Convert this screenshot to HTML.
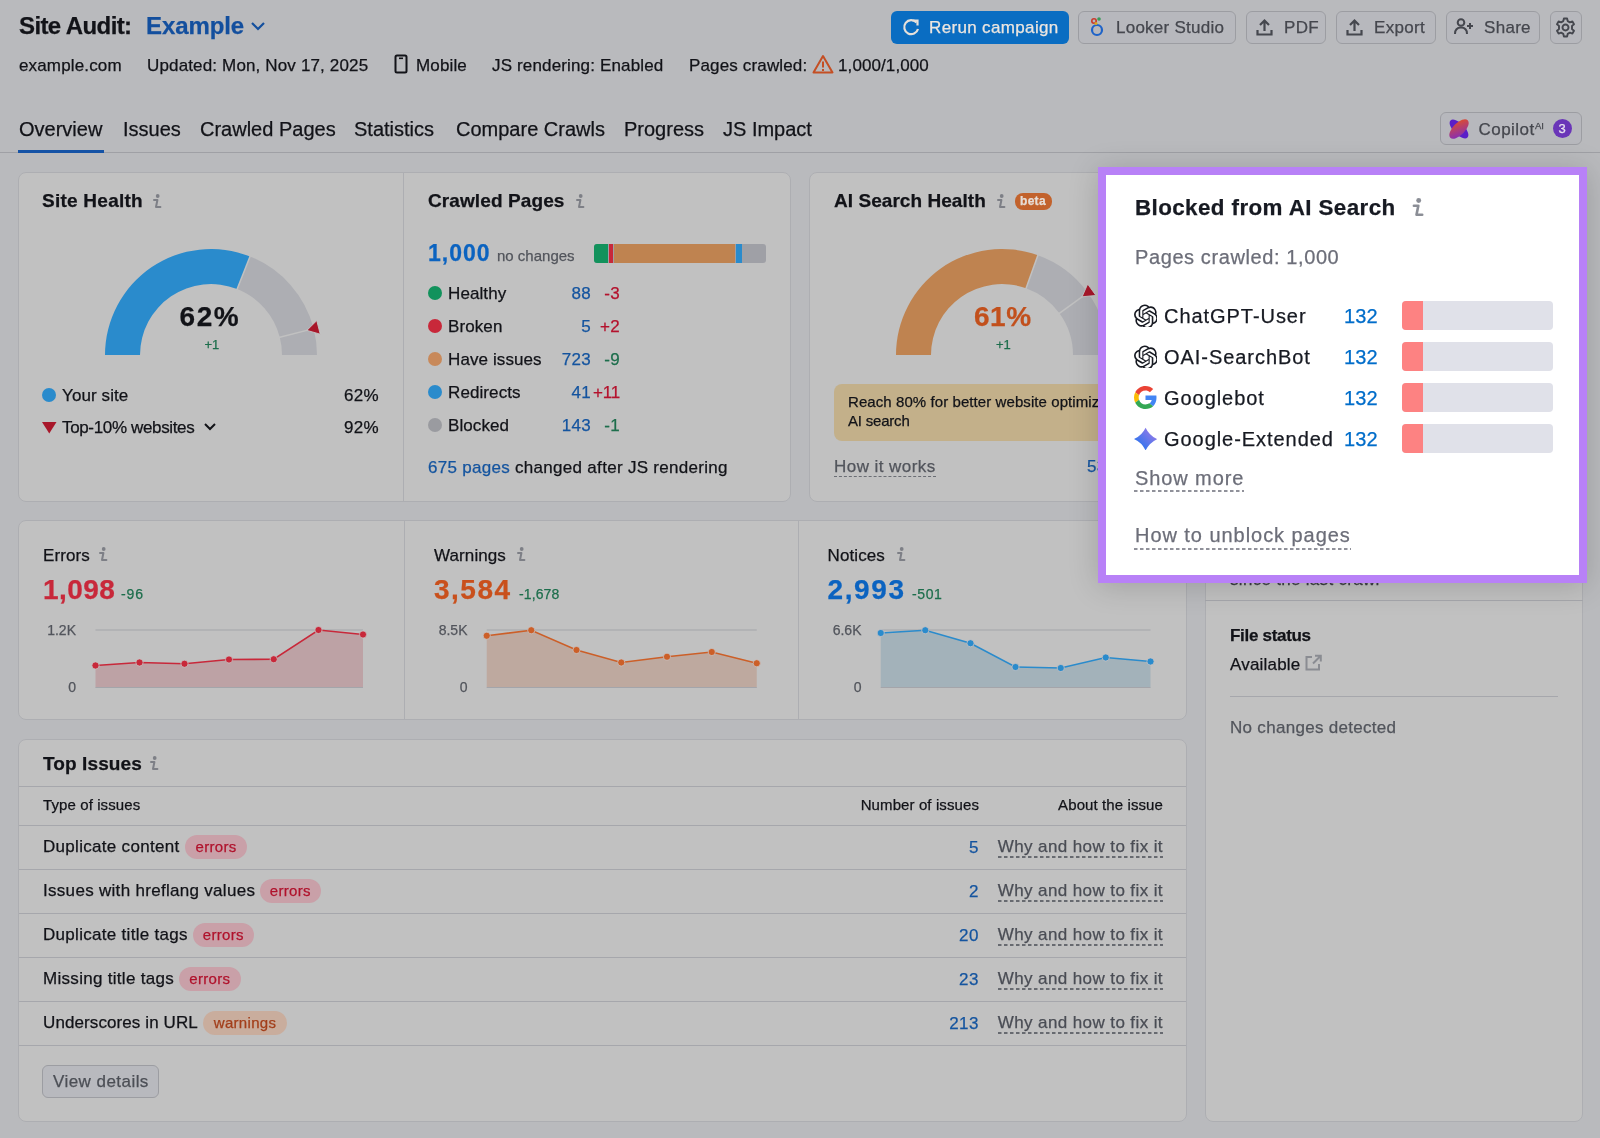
<!DOCTYPE html>
<html><head><meta charset="utf-8"><title>Site Audit</title>
<style>
html,body{margin:0;padding:0;}
body{width:1600px;height:1138px;position:relative;overflow:hidden;will-change:transform;background:#b9babd;font-family:"Liberation Sans",sans-serif;}
.t{position:absolute;white-space:nowrap;-webkit-text-stroke:0.25px currentColor;}
.r{position:absolute;}
.badge{display:inline-block;height:24px;line-height:24px;border-radius:12px;padding:0 10px;font-size:15px;margin-left:6px;letter-spacing:0.2px;}
.badge.errors{background:#c9a2aa;color:#b4122d;}
.badge.warnings{background:#c9ae9e;color:#a8401c;}
</style></head><body>
<div class="t" style="left:19px;top:14.38px;font-size:24px;line-height:24px;font-weight:700;color:#121318;letter-spacing:-0.6px;">Site Audit:</div>
<div class="t" style="left:146px;top:14.38px;font-size:24px;line-height:24px;font-weight:700;color:#134f9e;letter-spacing:-0.1px;">Example</div>
<svg class="r" style="left:250px;top:20px;" width="16" height="12" viewBox="0 0 16 12"><path d="M2 3 L8 9 L14 3" fill="none" stroke="#134f9e" stroke-width="2.2"/></svg>
<div class="t" style="left:19px;top:56.51px;font-size:17px;line-height:17px;font-weight:400;color:#121318;letter-spacing:0.15px;">example.com</div>
<div class="t" style="left:147px;top:56.51px;font-size:17px;line-height:17px;font-weight:400;color:#121318;letter-spacing:0.15px;">Updated: Mon, Nov 17, 2025</div>
<svg class="r" style="left:393px;top:54px;" width="16" height="20" viewBox="0 0 16 20"><rect x="2.5" y="1.5" width="11" height="17" rx="1.5" fill="none" stroke="#121318" stroke-width="2"/><rect x="6" y="3.5" width="4" height="1.6" fill="#121318"/></svg>
<div class="t" style="left:416px;top:56.51px;font-size:17px;line-height:17px;font-weight:400;color:#121318;letter-spacing:0.15px;">Mobile</div>
<div class="t" style="left:492px;top:56.51px;font-size:17px;line-height:17px;font-weight:400;color:#121318;letter-spacing:0.15px;">JS rendering: Enabled</div>
<div class="t" style="left:689px;top:56.51px;font-size:17px;line-height:17px;font-weight:400;color:#121318;letter-spacing:0.15px;">Pages crawled:</div>
<svg class="r" style="left:812px;top:54px;" width="22" height="20" viewBox="0 0 22 20"><path d="M11 2 L20.5 18.5 L1.5 18.5 Z" fill="none" stroke="#c44f24" stroke-width="2" stroke-linejoin="round"/><rect x="10" y="7.5" width="2" height="6" fill="#c44f24"/><rect x="10" y="15" width="2" height="2" fill="#c44f24"/></svg>
<div class="t" style="left:838px;top:56.51px;font-size:17px;line-height:17px;font-weight:400;color:#121318;letter-spacing:0.1px;">1,000/1,000</div>
<div class="r" style="left:891px;top:10.5px;width:177.5px;height:33px;background:#0a6dc2;border-radius:6px;"></div>
<svg class="r" style="left:900px;top:16px;" width="22" height="22" viewBox="0 0 22 22"><path d="M16.5 6.5 A7 7 0 1 0 18 13" fill="none" stroke="#e6e0da" stroke-width="2.2"/><path d="M12.5 4.5 L17.5 4.5 L17.5 9.5" fill="none" stroke="#e6e0da" stroke-width="2.2"/></svg>
<div class="t" style="left:929px;top:18.61px;font-size:17px;line-height:17px;font-weight:400;color:#ece6e0;letter-spacing:0.35px;">Rerun campaign</div>
<div class="r" style="left:1078px;top:10.5px;width:158px;height:33px;background:#b7b8bd;border:1px solid #9c9da2;border-radius:6px;box-sizing:border-box;"></div>
<svg class="r" style="left:1089px;top:15px;" width="16" height="24" viewBox="0 0 16 24"><circle cx="8" cy="15" r="5" fill="none" stroke="#1e63c8" stroke-width="2.2"/><circle cx="5" cy="6" r="2.2" fill="none" stroke="#c83a2a" stroke-width="1.6"/><circle cx="10" cy="4" r="1.8" fill="#3a9a5a"/><circle cx="7" cy="8.5" r="1.5" fill="#d8a820"/></svg>
<div class="t" style="left:1116px;top:18.61px;font-size:17px;line-height:17px;font-weight:400;color:#45474e;letter-spacing:0.25px;">Looker Studio</div>
<div class="r" style="left:1245.5px;top:10.5px;width:80.5px;height:33px;background:#b7b8bd;border:1px solid #9c9da2;border-radius:6px;box-sizing:border-box;"></div>
<svg class="r" style="left:1256px;top:18px;" width="17" height="18" viewBox="0 0 17 18"><path d="M8.5 13 V3 M4 7 L8.5 2.5 L13 7" fill="none" stroke="#45474e" stroke-width="2.2"/><path d="M1.5 12 V16.5 H15.5 V12" fill="none" stroke="#45474e" stroke-width="2.2"/></svg>
<div class="t" style="left:1284px;top:18.61px;font-size:17px;line-height:17px;font-weight:400;color:#45474e;letter-spacing:0.3px;">PDF</div>
<div class="r" style="left:1335.5px;top:10.5px;width:100.5px;height:33px;background:#b7b8bd;border:1px solid #9c9da2;border-radius:6px;box-sizing:border-box;"></div>
<svg class="r" style="left:1346px;top:18px;" width="17" height="18" viewBox="0 0 17 18"><path d="M8.5 13 V3 M4 7 L8.5 2.5 L13 7" fill="none" stroke="#45474e" stroke-width="2.2"/><path d="M1.5 12 V16.5 H15.5 V12" fill="none" stroke="#45474e" stroke-width="2.2"/></svg>
<div class="t" style="left:1374px;top:18.61px;font-size:17px;line-height:17px;font-weight:400;color:#45474e;letter-spacing:0.3px;">Export</div>
<div class="r" style="left:1445.5px;top:10.5px;width:94.5px;height:33px;background:#b7b8bd;border:1px solid #9c9da2;border-radius:6px;box-sizing:border-box;"></div>
<svg class="r" style="left:1454px;top:17px;" width="20" height="18" viewBox="0 0 20 18"><circle cx="7" cy="5.5" r="3.3" fill="none" stroke="#45474e" stroke-width="2"/><path d="M1 17 C1 12 4 10.5 7 10.5 C10 10.5 13 12 13 17" fill="none" stroke="#45474e" stroke-width="2"/><path d="M16 6 V12 M13 9 H19" stroke="#45474e" stroke-width="2"/></svg>
<div class="t" style="left:1484px;top:18.61px;font-size:17px;line-height:17px;font-weight:400;color:#45474e;letter-spacing:0.3px;">Share</div>
<div class="r" style="left:1549.5px;top:10.5px;width:32.5px;height:33px;background:#b7b8bd;border:1px solid #9c9da2;border-radius:6px;box-sizing:border-box;"></div>
<svg class="r" style="left:1555px;top:17px;" width="21" height="21" viewBox="0 0 21 21"><g transform="translate(10.5,10.5)"><path d="M-1.6 -9 H1.6 L2.2 -6.4 L4.4 -5.2 L6.9 -6.1 L8.5 -3.3 L6.5 -1.6 V1.6 L8.5 3.3 L6.9 6.1 L4.4 5.2 L2.2 6.4 L1.6 9 H-1.6 L-2.2 6.4 L-4.4 5.2 L-6.9 6.1 L-8.5 3.3 L-6.5 1.6 V-1.6 L-8.5 -3.3 L-6.9 -6.1 L-4.4 -5.2 L-2.2 -6.4 Z" fill="none" stroke="#45474e" stroke-width="1.9" stroke-linejoin="round"/><circle r="3" fill="none" stroke="#45474e" stroke-width="1.9"/></g></svg>
<div class="t" style="left:19px;top:118.87px;font-size:20px;line-height:20px;font-weight:400;color:#121318;letter-spacing:0px;">Overview</div>
<div class="t" style="left:123px;top:118.87px;font-size:20px;line-height:20px;font-weight:400;color:#121318;letter-spacing:0px;">Issues</div>
<div class="t" style="left:200px;top:118.87px;font-size:20px;line-height:20px;font-weight:400;color:#121318;letter-spacing:0px;">Crawled Pages</div>
<div class="t" style="left:354px;top:118.87px;font-size:20px;line-height:20px;font-weight:400;color:#121318;letter-spacing:0px;">Statistics</div>
<div class="t" style="left:456px;top:118.87px;font-size:20px;line-height:20px;font-weight:400;color:#121318;letter-spacing:0px;">Compare Crawls</div>
<div class="t" style="left:624px;top:118.87px;font-size:20px;line-height:20px;font-weight:400;color:#121318;letter-spacing:0px;">Progress</div>
<div class="t" style="left:723px;top:118.87px;font-size:20px;line-height:20px;font-weight:400;color:#121318;letter-spacing:0px;">JS Impact</div>
<div class="r" style="left:0px;top:152px;width:1600px;height:1px;background:#9fa0a5;"></div>
<div class="r" style="left:18px;top:150px;width:86px;height:3px;background:#1553a6;"></div>
<div class="r" style="left:1440px;top:112px;width:142px;height:33px;background:#b7b8bd;border:1px solid #9c9da2;border-radius:6px;box-sizing:border-box;"></div>
<svg class="r" style="left:1448px;top:117.5px;" width="22" height="22" viewBox="0 0 22 22"><defs><linearGradient id="cg" x1="0" y1="1" x2="1" y2="0"><stop offset="0" stop-color="#7a2ac8"/><stop offset="1" stop-color="#e8501e"/></linearGradient></defs><ellipse cx="11" cy="11" rx="12" ry="5.6" transform="rotate(45 11 11)" fill="#5a1fc8"/><ellipse cx="11" cy="11" rx="12.3" ry="6" transform="rotate(-45 11 11)" fill="url(#cg)"/></svg>
<div class="t" style="left:1478.5px;top:120.61px;font-size:17px;line-height:17px;font-weight:400;color:#45474e;letter-spacing:0.45px;">Copilot</div>
<div class="t" style="left:1535px;top:120.96px;font-size:9.5px;line-height:9.5px;font-weight:400;color:#45474e;letter-spacing:0px;">AI</div>
<div class="r" style="left:1553px;top:119px;width:19px;height:19px;background:#6a35b8;border-radius:50%;"></div>
<div class="t" style="left:1558.5px;top:122.00px;font-size:13px;line-height:13px;font-weight:400;color:#e8e2f0;letter-spacing:0px;">3</div>
<div class="r" style="left:18px;top:172px;width:773px;height:330px;background:#c1c1c1;border:1px solid #adaeb2;border-radius:8px;box-sizing:border-box;"></div>
<div class="r" style="left:403px;top:173px;width:1px;height:328px;background:#adaeb2;"></div>
<div class="r" style="left:809px;top:172px;width:378px;height:330px;background:#c1c1c1;border:1px solid #adaeb2;border-radius:8px;box-sizing:border-box;"></div>
<div class="r" style="left:1205px;top:172px;width:378px;height:950px;background:#c1c1c1;border:1px solid #adaeb2;border-radius:8px;box-sizing:border-box;"></div>
<div class="t" style="left:42px;top:191.42px;font-size:19px;line-height:19px;font-weight:700;color:#121318;letter-spacing:0.25px;">Site Health</div>
<svg class="r" style="left:150.7px;top:190.5px;" width="14.0" height="20.0" viewBox="0 0 14.0 20.0"><g transform="scale(1.0)"><circle cx="6.7" cy="5" r="1.9" fill="#7d7f86"/><path d="M3 9 H6.4 L5 16 H9.4" fill="none" stroke="#7d7f86" stroke-width="2" stroke-linejoin="round" stroke-linecap="round"/></g></svg>
<svg class="r" style="left:0px;top:0px;pointer-events:none;" width="1600" height="1138" viewBox="0 0 1600 1138"><path d="M105.00 355.00 A106 106 0 0 1 250.02 256.44 L237.14 288.99 A71 71 0 0 0 140.00 355.00 Z" fill="#2a8bcc"/><path d="M250.02 256.44 A106 106 0 0 1 313.67 328.64 L279.77 337.34 A71 71 0 0 0 237.14 288.99 Z" fill="#adaeb3"/><path d="M313.67 328.64 A106 106 0 0 1 317.00 355.00 L282.00 355.00 A71 71 0 0 0 279.77 337.34 Z" fill="#adaeb3"/><line x1="250.39" y1="255.51" x2="236.77" y2="289.92" stroke="#c1c1c1" stroke-width="1.5"/><line x1="314.64" y1="328.39" x2="278.80" y2="337.59" stroke="#c1c1c1" stroke-width="1.5"/><path d="M0 0 L-7 -12 L7 -12 Z" fill="#a8172a" stroke="#c6cccc" stroke-width="0.8" transform="translate(306.89,330.38) rotate(75.6)"/></svg>
<div class="t" style="left:179.5px;top:303.00px;font-size:28px;line-height:28px;font-weight:700;color:#121318;letter-spacing:1.6px;">62%</div>
<div class="t" style="left:204.5px;top:338.40px;font-size:13px;line-height:13px;font-weight:400;color:#1d6e4c;letter-spacing:0px;">+1</div>
<div class="r" style="left:42px;top:388px;width:14px;height:14px;background:#2a8bcc;border-radius:50%;"></div>
<div class="t" style="left:62px;top:386.81px;font-size:17px;line-height:17px;font-weight:400;color:#121318;letter-spacing:0.1px;">Your site</div>
<div class="t" style="right:1221px;top:386.81px;font-size:17px;line-height:17px;font-weight:400;color:#121318;letter-spacing:0.3px;">62%</div>
<svg class="r" style="left:42px;top:422px;" width="15" height="12" viewBox="0 0 15 12"><path d="M0 0 H14.5 L7.25 11.5 Z" fill="#a8172a"/></svg>
<div class="t" style="left:62px;top:419.21px;font-size:17px;line-height:17px;font-weight:400;color:#121318;letter-spacing:-0.35px;">Top-10% websites</div>
<svg class="r" style="left:203px;top:421px;" width="14" height="12" viewBox="0 0 14 12"><path d="M2 3 L7 8 L12 3" fill="none" stroke="#121318" stroke-width="2"/></svg>
<div class="t" style="right:1221px;top:419.21px;font-size:17px;line-height:17px;font-weight:400;color:#121318;letter-spacing:0.3px;">92%</div>
<div class="t" style="left:428px;top:191.42px;font-size:19px;line-height:19px;font-weight:700;color:#121318;letter-spacing:0.1px;">Crawled Pages</div>
<svg class="r" style="left:573.8px;top:190.5px;" width="14.0" height="20.0" viewBox="0 0 14.0 20.0"><g transform="scale(1.0)"><circle cx="6.7" cy="5" r="1.9" fill="#7d7f86"/><path d="M3 9 H6.4 L5 16 H9.4" fill="none" stroke="#7d7f86" stroke-width="2" stroke-linejoin="round" stroke-linecap="round"/></g></svg>
<div class="t" style="left:428px;top:241.53px;font-size:23px;line-height:23px;font-weight:700;color:#0b63c0;letter-spacing:1.0px;">1,000</div>
<div class="t" style="left:497px;top:248.30px;font-size:15px;line-height:15px;font-weight:400;color:#52555c;letter-spacing:0px;">no changes</div>
<div class="r" style="left:594px;top:243.5px;width:172px;height:19px;background:#9fa0a6;border-radius:3px;"></div>
<div class="r" style="left:594px;top:243.5px;width:14px;height:19px;background:#12925c;border-radius:3px 0 0 3px;"></div>
<div class="r" style="left:609px;top:243.5px;width:4px;height:19px;background:#c8283a;"></div>
<div class="r" style="left:614px;top:243.5px;width:121px;height:19px;background:#bf8350;"></div>
<div class="r" style="left:736px;top:243.5px;width:6px;height:19px;background:#2a8bcc;"></div>
<div class="r" style="left:428px;top:286px;width:14px;height:14px;background:#12925c;border-radius:50%;"></div>
<div class="t" style="left:448px;top:284.61px;font-size:17px;line-height:17px;font-weight:400;color:#121318;letter-spacing:0.1px;">Healthy</div>
<div class="t" style="right:1009px;top:284.61px;font-size:17px;line-height:17px;font-weight:400;color:#14549f;letter-spacing:0.3px;">88</div>
<div class="t" style="right:980px;top:284.61px;font-size:17px;line-height:17px;font-weight:400;color:#b4122d;letter-spacing:0.3px;">-3</div>
<div class="r" style="left:428px;top:319px;width:14px;height:14px;background:#c8283a;border-radius:50%;"></div>
<div class="t" style="left:448px;top:317.61px;font-size:17px;line-height:17px;font-weight:400;color:#121318;letter-spacing:0.1px;">Broken</div>
<div class="t" style="right:1009px;top:317.61px;font-size:17px;line-height:17px;font-weight:400;color:#14549f;letter-spacing:0.3px;">5</div>
<div class="t" style="right:980px;top:317.61px;font-size:17px;line-height:17px;font-weight:400;color:#b4122d;letter-spacing:0.3px;">+2</div>
<div class="r" style="left:428px;top:352px;width:14px;height:14px;background:#c8895a;border-radius:50%;"></div>
<div class="t" style="left:448px;top:350.61px;font-size:17px;line-height:17px;font-weight:400;color:#121318;letter-spacing:0.1px;">Have issues</div>
<div class="t" style="right:1009px;top:350.61px;font-size:17px;line-height:17px;font-weight:400;color:#14549f;letter-spacing:0.3px;">723</div>
<div class="t" style="right:980px;top:350.61px;font-size:17px;line-height:17px;font-weight:400;color:#1d6e4c;letter-spacing:0.3px;">-9</div>
<div class="r" style="left:428px;top:385px;width:14px;height:14px;background:#2a8bcc;border-radius:50%;"></div>
<div class="t" style="left:448px;top:383.61px;font-size:17px;line-height:17px;font-weight:400;color:#121318;letter-spacing:0.1px;">Redirects</div>
<div class="t" style="right:1009px;top:383.61px;font-size:17px;line-height:17px;font-weight:400;color:#14549f;letter-spacing:0.3px;">41</div>
<div class="t" style="right:980px;top:383.61px;font-size:17px;line-height:17px;font-weight:400;color:#b4122d;letter-spacing:-0.2px;">+11</div>
<div class="r" style="left:428px;top:418px;width:14px;height:14px;background:#9a9ba0;border-radius:50%;"></div>
<div class="t" style="left:448px;top:416.61px;font-size:17px;line-height:17px;font-weight:400;color:#121318;letter-spacing:0.1px;">Blocked</div>
<div class="t" style="right:1009px;top:416.61px;font-size:17px;line-height:17px;font-weight:400;color:#14549f;letter-spacing:0.3px;">143</div>
<div class="t" style="right:980px;top:416.61px;font-size:17px;line-height:17px;font-weight:400;color:#1d6e4c;letter-spacing:0.3px;">-1</div>
<div class="t" style="left:428px;top:459.11px;font-size:17px;line-height:17px;font-weight:400;color:#14549f;letter-spacing:0.3px;">675 pages</div>
<div class="t" style="left:515px;top:459.11px;font-size:17px;line-height:17px;font-weight:400;color:#121318;letter-spacing:0.3px;">changed after JS rendering</div>
<div class="t" style="left:834px;top:191.42px;font-size:19px;line-height:19px;font-weight:700;color:#121318;letter-spacing:0.05px;">AI Search Health</div>
<svg class="r" style="left:994.7px;top:190.5px;" width="14.0" height="20.0" viewBox="0 0 14.0 20.0"><g transform="scale(1.0)"><circle cx="6.7" cy="5" r="1.9" fill="#7d7f86"/><path d="M3 9 H6.4 L5 16 H9.4" fill="none" stroke="#7d7f86" stroke-width="2" stroke-linejoin="round" stroke-linecap="round"/></g></svg>
<div class="r" style="left:1015px;top:193px;width:37px;height:16.5px;background:#c2622c;border-radius:8px;"></div>
<div class="t" style="left:1020px;top:195.34px;font-size:12px;line-height:12px;font-weight:700;color:#e6ddd6;letter-spacing:0.3px;">beta</div>
<svg class="r" style="left:0px;top:0px;pointer-events:none;" width="1600" height="1138" viewBox="0 0 1600 1138"><path d="M896.00 355.00 A106 106 0 0 1 1037.91 255.27 L1026.05 288.20 A71 71 0 0 0 931.00 355.00 Z" fill="#bf8350"/><path d="M1037.91 255.27 A106 106 0 0 1 1087.76 292.69 L1059.44 313.27 A71 71 0 0 0 1026.05 288.20 Z" fill="#adaeb3"/><path d="M1087.76 292.69 A106 106 0 0 1 1108.00 355.00 L1073.00 355.00 A71 71 0 0 0 1059.44 313.27 Z" fill="#adaeb3"/><line x1="1038.24" y1="254.33" x2="1025.71" y2="289.14" stroke="#c1c1c1" stroke-width="1.5"/><line x1="1088.56" y1="292.11" x2="1058.63" y2="313.86" stroke="#c1c1c1" stroke-width="1.5"/><path d="M0 0 L-7 -12 L7 -12 Z" fill="#a8172a" stroke="#c6cccc" stroke-width="0.8" transform="translate(1082.09,296.81) rotate(54.0)"/></svg>
<div class="t" style="left:974px;top:303.00px;font-size:28px;line-height:28px;font-weight:700;color:#c2501c;letter-spacing:0.5px;">61%</div>
<div class="t" style="left:996px;top:338.40px;font-size:13px;line-height:13px;font-weight:400;color:#1d6e4c;letter-spacing:0px;">+1</div>
<div class="r" style="left:834px;top:383.5px;width:350px;height:57px;background:#c3b08a;border-radius:8px;"></div>
<div class="t" style="left:848px;top:394.30px;font-size:15px;line-height:15px;font-weight:400;color:#121318;letter-spacing:0.08px;">Reach 80% for better website optimization for</div>
<div class="t" style="left:848px;top:413.30px;font-size:15px;line-height:15px;font-weight:400;color:#121318;letter-spacing:-0.2px;">AI search</div>
<div class="t" style="left:834px;top:457.61px;font-size:17px;line-height:17px;font-weight:400;color:#52555c;letter-spacing:0.45px;border-bottom:1px dashed #6a6d74;padding-bottom:1px;">How it works</div>
<div class="t" style="left:1087px;top:457.61px;font-size:17px;line-height:17px;font-weight:400;color:#14549f;letter-spacing:0.3px;">53 pages</div>
<div class="r" style="left:18px;top:520px;width:1169px;height:200px;background:#c1c1c1;border:1px solid #adaeb2;border-radius:8px;box-sizing:border-box;"></div>
<div class="r" style="left:404px;top:521px;width:1px;height:198px;background:#adaeb2;"></div>
<div class="r" style="left:798px;top:521px;width:1px;height:198px;background:#adaeb2;"></div>
<svg class="r" style="left:0px;top:0px;pointer-events:none;" width="1600" height="1138" viewBox="0 0 1600 1138"><line x1="95.5" y1="630" x2="363" y2="630" stroke="#a4a5aa" stroke-width="1.2"/><polygon points="95.5,687.5 95.50,665.50 139.50,662.50 184.50,663.75 229.00,659.50 273.75,659.25 318.50,630.00 363.00,634.50 363,687.5" fill="#bda2a5"/><line x1="95.5" y1="687.5" x2="363" y2="687.5" stroke="#a4a5aa" stroke-width="1.2"/><polyline points="95.50,665.50 139.50,662.50 184.50,663.75 229.00,659.50 273.75,659.25 318.50,630.00 363.00,634.50" fill="none" stroke="#c8283a" stroke-width="1.6"/><circle cx="95.50" cy="665.50" r="3.6" fill="#c8283a" stroke="#c9c3c3" stroke-width="0.8"/><circle cx="139.50" cy="662.50" r="3.6" fill="#c8283a" stroke="#c9c3c3" stroke-width="0.8"/><circle cx="184.50" cy="663.75" r="3.6" fill="#c8283a" stroke="#c9c3c3" stroke-width="0.8"/><circle cx="229.00" cy="659.50" r="3.6" fill="#c8283a" stroke="#c9c3c3" stroke-width="0.8"/><circle cx="273.75" cy="659.25" r="3.6" fill="#c8283a" stroke="#c9c3c3" stroke-width="0.8"/><circle cx="318.50" cy="630.00" r="3.6" fill="#c8283a" stroke="#c9c3c3" stroke-width="0.8"/><circle cx="363.00" cy="634.50" r="3.6" fill="#c8283a" stroke="#c9c3c3" stroke-width="0.8"/><line x1="486.75" y1="630" x2="756.75" y2="630" stroke="#a4a5aa" stroke-width="1.2"/><polygon points="486.75,687.5 486.75,635.75 531.25,630.25 576.50,650.00 621.25,662.50 667.00,656.75 711.75,652.00 756.75,663.25 756.75,687.5" fill="#bea99f"/><line x1="486.75" y1="687.5" x2="756.75" y2="687.5" stroke="#a4a5aa" stroke-width="1.2"/><polyline points="486.75,635.75 531.25,630.25 576.50,650.00 621.25,662.50 667.00,656.75 711.75,652.00 756.75,663.25" fill="none" stroke="#cc5f28" stroke-width="1.6"/><circle cx="486.75" cy="635.75" r="3.6" fill="#cc5f28" stroke="#c9c3c3" stroke-width="0.8"/><circle cx="531.25" cy="630.25" r="3.6" fill="#cc5f28" stroke="#c9c3c3" stroke-width="0.8"/><circle cx="576.50" cy="650.00" r="3.6" fill="#cc5f28" stroke="#c9c3c3" stroke-width="0.8"/><circle cx="621.25" cy="662.50" r="3.6" fill="#cc5f28" stroke="#c9c3c3" stroke-width="0.8"/><circle cx="667.00" cy="656.75" r="3.6" fill="#cc5f28" stroke="#c9c3c3" stroke-width="0.8"/><circle cx="711.75" cy="652.00" r="3.6" fill="#cc5f28" stroke="#c9c3c3" stroke-width="0.8"/><circle cx="756.75" cy="663.25" r="3.6" fill="#cc5f28" stroke="#c9c3c3" stroke-width="0.8"/><line x1="880.75" y1="630" x2="1150.5" y2="630" stroke="#a4a5aa" stroke-width="1.2"/><polygon points="880.75,687.5 880.75,633.00 925.25,630.25 970.50,643.25 1015.50,667.00 1060.75,668.00 1105.75,657.50 1150.50,661.50 1150.5,687.5" fill="#a3b2ba"/><line x1="880.75" y1="687.5" x2="1150.5" y2="687.5" stroke="#a4a5aa" stroke-width="1.2"/><polyline points="880.75,633.00 925.25,630.25 970.50,643.25 1015.50,667.00 1060.75,668.00 1105.75,657.50 1150.50,661.50" fill="none" stroke="#2a8bcc" stroke-width="1.6"/><circle cx="880.75" cy="633.00" r="3.6" fill="#2a8bcc" stroke="#c9c3c3" stroke-width="0.8"/><circle cx="925.25" cy="630.25" r="3.6" fill="#2a8bcc" stroke="#c9c3c3" stroke-width="0.8"/><circle cx="970.50" cy="643.25" r="3.6" fill="#2a8bcc" stroke="#c9c3c3" stroke-width="0.8"/><circle cx="1015.50" cy="667.00" r="3.6" fill="#2a8bcc" stroke="#c9c3c3" stroke-width="0.8"/><circle cx="1060.75" cy="668.00" r="3.6" fill="#2a8bcc" stroke="#c9c3c3" stroke-width="0.8"/><circle cx="1105.75" cy="657.50" r="3.6" fill="#2a8bcc" stroke="#c9c3c3" stroke-width="0.8"/><circle cx="1150.50" cy="661.50" r="3.6" fill="#2a8bcc" stroke="#c9c3c3" stroke-width="0.8"/></svg>
<div class="t" style="left:43px;top:546.91px;font-size:17px;line-height:17px;font-weight:400;color:#121318;letter-spacing:0.1px;">Errors</div>
<div class="t" style="left:43px;top:575.60px;font-size:28px;line-height:28px;font-weight:700;color:#c8283a;letter-spacing:0.45px;">1,098</div>
<div class="t" style="left:434px;top:546.91px;font-size:17px;line-height:17px;font-weight:400;color:#121318;letter-spacing:0.1px;">Warnings</div>
<div class="t" style="left:434px;top:575.60px;font-size:28px;line-height:28px;font-weight:700;color:#c9501c;letter-spacing:1.5px;">3,584</div>
<div class="t" style="left:827.5px;top:546.91px;font-size:17px;line-height:17px;font-weight:400;color:#121318;letter-spacing:0.1px;">Notices</div>
<div class="t" style="left:827.5px;top:575.60px;font-size:28px;line-height:28px;font-weight:700;color:#0b63c0;letter-spacing:1.6px;">2,993</div>
<svg class="r" style="left:97px;top:544.3px;" width="14.0" height="20.0" viewBox="0 0 14.0 20.0"><g transform="scale(1.0)"><circle cx="6.7" cy="5" r="1.9" fill="#7d7f86"/><path d="M3 9 H6.4 L5 16 H9.4" fill="none" stroke="#7d7f86" stroke-width="2" stroke-linejoin="round" stroke-linecap="round"/></g></svg>
<svg class="r" style="left:515px;top:544.3px;" width="14.0" height="20.0" viewBox="0 0 14.0 20.0"><g transform="scale(1.0)"><circle cx="6.7" cy="5" r="1.9" fill="#7d7f86"/><path d="M3 9 H6.4 L5 16 H9.4" fill="none" stroke="#7d7f86" stroke-width="2" stroke-linejoin="round" stroke-linecap="round"/></g></svg>
<svg class="r" style="left:894.5px;top:544.3px;" width="14.0" height="20.0" viewBox="0 0 14.0 20.0"><g transform="scale(1.0)"><circle cx="6.7" cy="5" r="1.9" fill="#7d7f86"/><path d="M3 9 H6.4 L5 16 H9.4" fill="none" stroke="#7d7f86" stroke-width="2" stroke-linejoin="round" stroke-linecap="round"/></g></svg>
<div class="t" style="left:121px;top:587.45px;font-size:14px;line-height:14px;font-weight:400;color:#1d6e4c;letter-spacing:0.9px;">-96</div>
<div class="t" style="left:519px;top:587.45px;font-size:14px;line-height:14px;font-weight:400;color:#1d6e4c;letter-spacing:0.1px;">-1,678</div>
<div class="t" style="left:912px;top:587.45px;font-size:14px;line-height:14px;font-weight:400;color:#1d6e4c;letter-spacing:0.6px;">-501</div>
<div class="t" style="right:1524px;top:623.15px;font-size:14px;line-height:14px;font-weight:400;color:#52555c;letter-spacing:0px;">1.2K</div>
<div class="t" style="right:1132.5px;top:623.15px;font-size:14px;line-height:14px;font-weight:400;color:#52555c;letter-spacing:0px;">8.5K</div>
<div class="t" style="right:738.5px;top:623.15px;font-size:14px;line-height:14px;font-weight:400;color:#52555c;letter-spacing:0px;">6.6K</div>
<div class="t" style="right:1524px;top:680.15px;font-size:14px;line-height:14px;font-weight:400;color:#52555c;letter-spacing:0px;">0</div>
<div class="t" style="right:1132.5px;top:680.15px;font-size:14px;line-height:14px;font-weight:400;color:#52555c;letter-spacing:0px;">0</div>
<div class="t" style="right:738.5px;top:680.15px;font-size:14px;line-height:14px;font-weight:400;color:#52555c;letter-spacing:0px;">0</div>
<div class="r" style="left:18px;top:739px;width:1169px;height:383px;background:#c1c1c1;border:1px solid #adaeb2;border-radius:8px;box-sizing:border-box;"></div>
<div class="t" style="left:43px;top:753.92px;font-size:19px;line-height:19px;font-weight:700;color:#121318;letter-spacing:0.1px;">Top Issues</div>
<svg class="r" style="left:148.4px;top:753.0px;" width="14.0" height="20.0" viewBox="0 0 14.0 20.0"><g transform="scale(1.0)"><circle cx="6.7" cy="5" r="1.9" fill="#7d7f86"/><path d="M3 9 H6.4 L5 16 H9.4" fill="none" stroke="#7d7f86" stroke-width="2" stroke-linejoin="round" stroke-linecap="round"/></g></svg>
<div class="r" style="left:19px;top:786px;width:1167px;height:1.3px;background:#a6a7ac;"></div>
<div class="r" style="left:19px;top:824.5px;width:1167px;height:1.3px;background:#a6a7ac;"></div>
<div class="r" style="left:19px;top:868.5px;width:1167px;height:1.3px;background:#a6a7ac;"></div>
<div class="r" style="left:19px;top:912.5px;width:1167px;height:1.3px;background:#a6a7ac;"></div>
<div class="r" style="left:19px;top:956.5px;width:1167px;height:1.3px;background:#a6a7ac;"></div>
<div class="r" style="left:19px;top:1000.5px;width:1167px;height:1.3px;background:#a6a7ac;"></div>
<div class="r" style="left:19px;top:1044.5px;width:1167px;height:1.3px;background:#a6a7ac;"></div>
<div class="t" style="left:43px;top:797.30px;font-size:15px;line-height:15px;font-weight:400;color:#121318;letter-spacing:0.1px;">Type of issues</div>
<div class="t" style="right:621px;top:797.30px;font-size:15px;line-height:15px;font-weight:400;color:#121318;letter-spacing:0.1px;">Number of issues</div>
<div class="t" style="right:437px;top:797.30px;font-size:15px;line-height:15px;font-weight:400;color:#121318;letter-spacing:0.1px;">About the issue</div>
<div class="t" style="left:43px;top:837.61px;font-size:17px;line-height:17px;font-weight:400;color:#121318;letter-spacing:0.3px;">Duplicate content</div>
<div class="r" style="left:185px;top:835px;width:62px;height:24px;border-radius:12px;background:#c9a0a8;"></div>
<div class="t" style="left:216.0px;top:838.80px;font-size:15px;line-height:15px;font-weight:400;color:#b0122c;letter-spacing:0.3px;transform:translateX(-50%);">errors</div>
<svg class="r" style="left:998px;top:855.8px;" width="165" height="2" viewBox="0 0 165 2"><line x1="0" y1="1" x2="165" y2="1" stroke="#4a4d55" stroke-width="1.3" stroke-dasharray="3.5 2.5"/></svg>
<div class="t" style="right:621px;top:838.61px;font-size:17px;line-height:17px;font-weight:400;color:#14549f;letter-spacing:0.5px;">5</div>
<div class="t" style="right:437px;top:837.61px;font-size:17px;line-height:17px;font-weight:400;color:#4a4d55;letter-spacing:0.4px;">Why and how to fix it</div>
<div class="t" style="left:43px;top:881.61px;font-size:17px;line-height:17px;font-weight:400;color:#121318;letter-spacing:0.3px;">Issues with hreflang values</div>
<div class="r" style="left:259.5px;top:879px;width:61.5px;height:24px;border-radius:12px;background:#c9a0a8;"></div>
<div class="t" style="left:290.25px;top:882.80px;font-size:15px;line-height:15px;font-weight:400;color:#b0122c;letter-spacing:0.3px;transform:translateX(-50%);">errors</div>
<svg class="r" style="left:998px;top:899.8px;" width="165" height="2" viewBox="0 0 165 2"><line x1="0" y1="1" x2="165" y2="1" stroke="#4a4d55" stroke-width="1.3" stroke-dasharray="3.5 2.5"/></svg>
<div class="t" style="right:621px;top:882.61px;font-size:17px;line-height:17px;font-weight:400;color:#14549f;letter-spacing:0.5px;">2</div>
<div class="t" style="right:437px;top:881.61px;font-size:17px;line-height:17px;font-weight:400;color:#4a4d55;letter-spacing:0.4px;">Why and how to fix it</div>
<div class="t" style="left:43px;top:925.61px;font-size:17px;line-height:17px;font-weight:400;color:#121318;letter-spacing:0.3px;">Duplicate title tags</div>
<div class="r" style="left:192.5px;top:923px;width:61.5px;height:24px;border-radius:12px;background:#c9a0a8;"></div>
<div class="t" style="left:223.25px;top:926.80px;font-size:15px;line-height:15px;font-weight:400;color:#b0122c;letter-spacing:0.3px;transform:translateX(-50%);">errors</div>
<svg class="r" style="left:998px;top:943.8px;" width="165" height="2" viewBox="0 0 165 2"><line x1="0" y1="1" x2="165" y2="1" stroke="#4a4d55" stroke-width="1.3" stroke-dasharray="3.5 2.5"/></svg>
<div class="t" style="right:621px;top:926.61px;font-size:17px;line-height:17px;font-weight:400;color:#14549f;letter-spacing:0.5px;">20</div>
<div class="t" style="right:437px;top:925.61px;font-size:17px;line-height:17px;font-weight:400;color:#4a4d55;letter-spacing:0.4px;">Why and how to fix it</div>
<div class="t" style="left:43px;top:969.61px;font-size:17px;line-height:17px;font-weight:400;color:#121318;letter-spacing:0.3px;">Missing title tags</div>
<div class="r" style="left:179px;top:967px;width:61.5px;height:24px;border-radius:12px;background:#c9a0a8;"></div>
<div class="t" style="left:209.75px;top:970.80px;font-size:15px;line-height:15px;font-weight:400;color:#b0122c;letter-spacing:0.3px;transform:translateX(-50%);">errors</div>
<svg class="r" style="left:998px;top:987.8px;" width="165" height="2" viewBox="0 0 165 2"><line x1="0" y1="1" x2="165" y2="1" stroke="#4a4d55" stroke-width="1.3" stroke-dasharray="3.5 2.5"/></svg>
<div class="t" style="right:621px;top:970.61px;font-size:17px;line-height:17px;font-weight:400;color:#14549f;letter-spacing:0.5px;">23</div>
<div class="t" style="right:437px;top:969.61px;font-size:17px;line-height:17px;font-weight:400;color:#4a4d55;letter-spacing:0.4px;">Why and how to fix it</div>
<div class="t" style="left:43px;top:1013.61px;font-size:17px;line-height:17px;font-weight:400;color:#121318;letter-spacing:0.1px;">Underscores in URL</div>
<div class="r" style="left:203px;top:1011px;width:84px;height:24px;border-radius:12px;background:#c9ad9d;"></div>
<div class="t" style="left:245.0px;top:1014.80px;font-size:15px;line-height:15px;font-weight:400;color:#a23e1a;letter-spacing:0.3px;transform:translateX(-50%);">warnings</div>
<svg class="r" style="left:998px;top:1031.8px;" width="165" height="2" viewBox="0 0 165 2"><line x1="0" y1="1" x2="165" y2="1" stroke="#4a4d55" stroke-width="1.3" stroke-dasharray="3.5 2.5"/></svg>
<div class="t" style="right:621px;top:1014.61px;font-size:17px;line-height:17px;font-weight:400;color:#14549f;letter-spacing:0.5px;">213</div>
<div class="t" style="right:437px;top:1013.61px;font-size:17px;line-height:17px;font-weight:400;color:#4a4d55;letter-spacing:0.4px;">Why and how to fix it</div>
<div class="r" style="left:42px;top:1065px;width:117px;height:33px;background:#b8b9be;border:1px solid #9c9da2;border-radius:6px;box-sizing:border-box;"></div>
<div class="t" style="left:53px;top:1072.61px;font-size:17px;line-height:17px;font-weight:400;color:#4c4f56;letter-spacing:0.45px;">View details</div>
<div class="r" style="left:1205px;top:599.5px;width:378px;height:1px;background:#a6a7ac;"></div>
<div class="t" style="left:1230px;top:627.11px;font-size:17px;line-height:17px;font-weight:700;color:#121318;letter-spacing:-0.3px;">File status</div>
<div class="t" style="left:1230px;top:655.81px;font-size:17px;line-height:17px;font-weight:400;color:#121318;letter-spacing:0.2px;">Available</div>
<svg class="r" style="left:1304px;top:654px;" width="19" height="18" viewBox="0 0 19 18"><path d="M8 3 H2.5 V15.5 H15 V10" fill="none" stroke="#8a8c92" stroke-width="2"/><path d="M9 9.5 L16.5 2 M11 1.8 H16.8 V7.6" fill="none" stroke="#8a8c92" stroke-width="2"/></svg>
<div class="r" style="left:1230px;top:695.5px;width:328px;height:1.2px;background:#a6a7ac;"></div>
<div class="t" style="left:1230px;top:718.61px;font-size:17px;line-height:17px;font-weight:400;color:#52555c;letter-spacing:0.3px;">No changes detected</div>
<div class="t" style="left:1230px;top:570.61px;font-size:17px;line-height:17px;font-weight:400;color:#3a3c42;letter-spacing:0.3px;">since the last crawl</div>
<div class="r" style="left:1098px;top:167px;width:489px;height:416px;background:#fff;border:8px solid #b881f7;box-sizing:border-box;box-shadow:0 3px 28px rgba(0,0,0,0.17);"></div>
<div class="t" style="left:1135px;top:196.94px;font-size:22.4px;line-height:22.4px;font-weight:700;color:#171a22;letter-spacing:0.4px;">Blocked from AI Search</div>
<svg class="r" style="left:1410px;top:194.4px;" width="18.2" height="26.0" viewBox="0 0 18.2 26.0"><g transform="scale(1.3)"><circle cx="6.7" cy="5" r="1.9" fill="#8b8e96"/><path d="M3 9 H6.4 L5 16 H9.4" fill="none" stroke="#8b8e96" stroke-width="2" stroke-linejoin="round" stroke-linecap="round"/></g></svg>
<div class="t" style="left:1135px;top:247.07px;font-size:20px;line-height:20px;font-weight:400;color:#6c6e79;letter-spacing:0.6px;">Pages crawled: 1,000</div>
<svg class="r" style="left:1134px;top:304.2px;" width="23" height="23" viewBox="0 0 23 23"><path transform="translate(0,0.5)" fill="#171a22" d="M22.2819 9.8211a5.9847 5.9847 0 0 0-.5157-4.9108 6.0462 6.0462 0 0 0-6.5098-2.9A6.0651 6.0651 0 0 0 4.9807 4.1818a5.9847 5.9847 0 0 0-3.9977 2.9 6.0462 6.0462 0 0 0 .7427 7.0966 5.98 5.98 0 0 0 .511 4.9107 6.051 6.051 0 0 0 6.5146 2.9001A5.9847 5.9847 0 0 0 13.2599 24a6.0557 6.0557 0 0 0 5.7718-4.2058 5.9894 5.9894 0 0 0 3.9977-2.9001 6.0557 6.0557 0 0 0-.7475-7.0729zm-9.022 12.6081a4.4755 4.4755 0 0 1-2.8764-1.0408l.1419-.0804 4.7783-2.7582a.7948.7948 0 0 0 .3927-.6813v-6.7369l2.02 1.1686a.071.071 0 0 1 .038.052v5.5826a4.504 4.504 0 0 1-4.4945 4.4944zm-9.6607-4.1254a4.4708 4.4708 0 0 1-.5346-3.0137l.142.0852 4.783 2.7582a.7712.7712 0 0 0 .7806 0l5.8428-3.3685v2.3324a.0804.0804 0 0 1-.0332.0615L9.74 19.9502a4.4992 4.4992 0 0 1-6.1408-1.6464zM2.3408 7.8956a4.485 4.485 0 0 1 2.3655-1.9728V11.6a.7664.7664 0 0 0 .3879.6765l5.8144 3.3543-2.0201 1.1685a.0757.0757 0 0 1-.071 0l-4.8303-2.7865A4.504 4.504 0 0 1 2.3408 7.872zm16.5963 3.8558L13.1038 8.364 15.1192 7.2a.0757.0757 0 0 1 .071 0l4.8303 2.7913a4.4944 4.4944 0 0 1-.6765 8.1042v-5.6772a.79.79 0 0 0-.407-.667zm2.0107-3.0231l-.142-.0852-4.7735-2.7818a.7759.7759 0 0 0-.7854 0L9.409 9.2297V6.8974a.0662.0662 0 0 1 .0284-.0615l4.8303-2.7866a4.4992 4.4992 0 0 1 6.6802 4.66zM8.3065 12.863l-2.02-1.1638a.0804.0804 0 0 1-.038-.0567V6.0742a4.4992 4.4992 0 0 1 7.3757-3.4537l-.142.0805L8.704 5.459a.7948.7948 0 0 0-.3927.6813zm1.0976-2.3654l2.602-1.4998 2.6069 1.4998v2.9994l-2.5974 1.4997-2.6067-1.4997Z"/></svg>
<div class="t" style="left:1164px;top:305.77px;font-size:20px;line-height:20px;font-weight:400;color:#171a22;letter-spacing:0.95px;">ChatGPT-User</div>
<div class="t" style="right:222.4000000000001px;top:305.77px;font-size:20px;line-height:20px;font-weight:400;color:#006dca;letter-spacing:0.1px;">132</div>
<div class="r" style="left:1402px;top:301.2px;width:151px;height:29px;background:#e0e1e9;border-radius:4px;"></div>
<div class="r" style="left:1402px;top:301.2px;width:20.5px;height:29px;background:#fd8282;border-radius:4px 0 0 4px;"></div>
<svg class="r" style="left:1134px;top:345.2px;" width="23" height="23" viewBox="0 0 23 23"><path transform="translate(0,0.5)" fill="#171a22" d="M22.2819 9.8211a5.9847 5.9847 0 0 0-.5157-4.9108 6.0462 6.0462 0 0 0-6.5098-2.9A6.0651 6.0651 0 0 0 4.9807 4.1818a5.9847 5.9847 0 0 0-3.9977 2.9 6.0462 6.0462 0 0 0 .7427 7.0966 5.98 5.98 0 0 0 .511 4.9107 6.051 6.051 0 0 0 6.5146 2.9001A5.9847 5.9847 0 0 0 13.2599 24a6.0557 6.0557 0 0 0 5.7718-4.2058 5.9894 5.9894 0 0 0 3.9977-2.9001 6.0557 6.0557 0 0 0-.7475-7.0729zm-9.022 12.6081a4.4755 4.4755 0 0 1-2.8764-1.0408l.1419-.0804 4.7783-2.7582a.7948.7948 0 0 0 .3927-.6813v-6.7369l2.02 1.1686a.071.071 0 0 1 .038.052v5.5826a4.504 4.504 0 0 1-4.4945 4.4944zm-9.6607-4.1254a4.4708 4.4708 0 0 1-.5346-3.0137l.142.0852 4.783 2.7582a.7712.7712 0 0 0 .7806 0l5.8428-3.3685v2.3324a.0804.0804 0 0 1-.0332.0615L9.74 19.9502a4.4992 4.4992 0 0 1-6.1408-1.6464zM2.3408 7.8956a4.485 4.485 0 0 1 2.3655-1.9728V11.6a.7664.7664 0 0 0 .3879.6765l5.8144 3.3543-2.0201 1.1685a.0757.0757 0 0 1-.071 0l-4.8303-2.7865A4.504 4.504 0 0 1 2.3408 7.872zm16.5963 3.8558L13.1038 8.364 15.1192 7.2a.0757.0757 0 0 1 .071 0l4.8303 2.7913a4.4944 4.4944 0 0 1-.6765 8.1042v-5.6772a.79.79 0 0 0-.407-.667zm2.0107-3.0231l-.142-.0852-4.7735-2.7818a.7759.7759 0 0 0-.7854 0L9.409 9.2297V6.8974a.0662.0662 0 0 1 .0284-.0615l4.8303-2.7866a4.4992 4.4992 0 0 1 6.6802 4.66zM8.3065 12.863l-2.02-1.1638a.0804.0804 0 0 1-.038-.0567V6.0742a4.4992 4.4992 0 0 1 7.3757-3.4537l-.142.0805L8.704 5.459a.7948.7948 0 0 0-.3927.6813zm1.0976-2.3654l2.602-1.4998 2.6069 1.4998v2.9994l-2.5974 1.4997-2.6067-1.4997Z"/></svg>
<div class="t" style="left:1164px;top:346.77px;font-size:20px;line-height:20px;font-weight:400;color:#171a22;letter-spacing:0.95px;">OAI-SearchBot</div>
<div class="t" style="right:222.4000000000001px;top:346.77px;font-size:20px;line-height:20px;font-weight:400;color:#006dca;letter-spacing:0.1px;">132</div>
<div class="r" style="left:1402px;top:342.2px;width:151px;height:29px;background:#e0e1e9;border-radius:4px;"></div>
<div class="r" style="left:1402px;top:342.2px;width:20.5px;height:29px;background:#fd8282;border-radius:4px 0 0 4px;"></div>
<svg class="r" style="left:1134px;top:386.2px;" width="23" height="23" viewBox="0 0 23 23"><g transform="scale(0.479)"><path fill="#EA4335" d="M24 9.5c3.54 0 6.71 1.22 9.21 3.6l6.85-6.85C35.9 2.38 30.47 0 24 0 14.62 0 6.51 5.38 2.56 13.22l7.98 6.19C12.43 13.72 17.74 9.5 24 9.5z"/><path fill="#4285F4" d="M46.98 24.55c0-1.57-.15-3.09-.38-4.55H24v9.02h12.94c-.58 2.960-2.26 5.48-4.78 7.18l7.730 6c4.51-4.18 7.09-10.36 7.09-17.65z"/><path fill="#FBBC05" d="M10.53 28.59c-.48-1.45-.76-2.99-.76-4.59s.27-3.14.76-4.590l-7.98-6.19C.92 16.46 0 20.12 0 24c0 3.88.92 7.54 2.56 10.78l7.97-6.19z"/><path fill="#34A853" d="M24 48c6.48 0 11.93-2.13 15.89-5.81l-7.73-6c-2.15 1.45-4.92 2.3-8.160 2.3-6.26 0-11.57-4.22-13.47-9.91l-7.98 6.19C6.51 42.62 14.62 48 24 48z"/></g></svg>
<div class="t" style="left:1164px;top:387.77px;font-size:20px;line-height:20px;font-weight:400;color:#171a22;letter-spacing:0.95px;">Googlebot</div>
<div class="t" style="right:222.4000000000001px;top:387.77px;font-size:20px;line-height:20px;font-weight:400;color:#006dca;letter-spacing:0.1px;">132</div>
<div class="r" style="left:1402px;top:383.2px;width:151px;height:29px;background:#e0e1e9;border-radius:4px;"></div>
<div class="r" style="left:1402px;top:383.2px;width:20.5px;height:29px;background:#fd8282;border-radius:4px 0 0 4px;"></div>
<svg class="r" style="left:1134px;top:427.2px;" width="23" height="23" viewBox="0 0 23 23"><defs><linearGradient id="gm" x1="0" y1="1" x2="1" y2="0"><stop offset="0.2" stop-color="#2f74ee"/><stop offset="0.8" stop-color="#8d7ae8"/></linearGradient></defs><path d="M11.6 0.7 Q15.2 8.4 23.1 12.1 Q15.2 15.8 11.6 23.5 Q8 15.8 0 12.1 Q8 8.4 11.6 0.7 Z" fill="url(#gm)"/></svg>
<div class="t" style="left:1164px;top:428.77px;font-size:20px;line-height:20px;font-weight:400;color:#171a22;letter-spacing:0.95px;">Google-Extended</div>
<div class="t" style="right:222.4000000000001px;top:428.77px;font-size:20px;line-height:20px;font-weight:400;color:#006dca;letter-spacing:0.1px;">132</div>
<div class="r" style="left:1402px;top:424.2px;width:151px;height:29px;background:#e0e1e9;border-radius:4px;"></div>
<div class="r" style="left:1402px;top:424.2px;width:20.5px;height:29px;background:#fd8282;border-radius:4px 0 0 4px;"></div>
<div class="t" style="left:1135px;top:468.37px;font-size:20px;line-height:20px;font-weight:400;color:#6c6e79;letter-spacing:0.9px;">Show more</div>
<svg class="r" style="left:1134px;top:490px;" width="110" height="2" viewBox="0 0 110 2"><line x1="0" y1="1" x2="110" y2="1" stroke="#6c6e79" stroke-width="1.5" stroke-dasharray="3.5 2.5"/></svg>
<div class="t" style="left:1135px;top:525.07px;font-size:20px;line-height:20px;font-weight:400;color:#6c6e79;letter-spacing:0.95px;">How to unblock pages</div>
<svg class="r" style="left:1134px;top:547.5px;" width="217" height="2" viewBox="0 0 217 2"><line x1="0" y1="1" x2="217" y2="1" stroke="#6c6e79" stroke-width="1.5" stroke-dasharray="3.5 2.5"/></svg>
</body></html>
